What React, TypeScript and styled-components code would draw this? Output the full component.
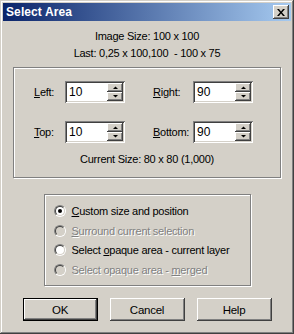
import React from "react";
import styled, { createGlobalStyle } from "styled-components";

const Global = createGlobalStyle`
  html, body { margin: 0; padding: 0; background: #D4D0C8; }
  body { font-family: "Liberation Sans", Arial, sans-serif; font-size: 11px; color: #000; letter-spacing: -0.25px; }
`;

const Window = styled.div`
  box-sizing: border-box;
  width: 294px;
  height: 334px;
  background: #D4D0C8;
  padding: 3px;
  box-shadow: inset -1px -1px 0 #404040, inset 1px 1px 0 #D4D0C8,
    inset -2px -2px 0 #808080, inset 2px 2px 0 #ffffff;
  display: flex;
  flex-direction: column;
`;

const TitleBar = styled.div`
  height: 18px;
  background: linear-gradient(to right, #0A246A, #A6CAF0);
  display: flex;
  align-items: center;
  justify-content: space-between;
  padding: 0 2px 0 3px;
`;

const Title = styled.span`
  color: #fff;
  font-weight: bold;
  font-size: 12px;
  letter-spacing: 0.1px;
`;

const Raised = styled.button`
  box-sizing: border-box;
  background: #D4D0C8;
  border: none;
  padding: 0;
  margin: 0;
  font-family: inherit;
  letter-spacing: inherit;
  color: #000;
  box-shadow: inset -1px -1px 0 #404040, inset 1px 1px 0 #ffffff,
    inset -2px -2px 0 #808080, inset 2px 2px 0 #D4D0C8;
  display: flex;
  align-items: center;
  justify-content: center;
`;

const CloseButton = styled(Raised)`
  width: 16px;
  height: 14px;
  box-shadow: inset -1px -1px 0 #404040, inset 1px 1px 0 #ffffff,
    inset -2px -2px 0 #808080;
`;

const Content = styled.div`
  flex: 1;
  display: flex;
  flex-direction: column;
  align-items: center;
  padding-top: 7px;
`;

const InfoLine = styled.div`
  line-height: 17px;
  height: 17px;
  text-align: center;
  white-space: pre;
`;

const GroupBox = styled.div<{ $w: number; $h: number; $mt: number }>`
  box-sizing: border-box;
  width: ${(p) => p.$w}px;
  height: ${(p) => p.$h}px;
  margin-top: ${(p) => p.$mt}px;
  border: 1px solid #808080;
  box-shadow: 1px 1px 0 #ffffff, inset 1px 1px 0 #ffffff;
`;

const FieldsGrid = styled.div`
  display: grid;
  grid-template-columns: 31px 60px 28px 40px 60px;
  row-gap: 18px;
  padding: 13px 0 0 20px;
  align-items: center;
`;

const Label = styled.label`
  line-height: 22px;
`;

const SpinBox = styled.div`
  box-sizing: border-box;
  height: 22px;
  width: 60px;
  background: #fff;
  box-shadow: inset 1px 1px 0 #808080, inset -1px -1px 0 #ffffff,
    inset 2px 2px 0 #404040, inset -2px -2px 0 #D4D0C8;
  display: flex;
  align-items: center;
  padding: 2px 2px 2px 4px;
`;

const SpinValue = styled.span`
  flex: 1;
  font-size: 12px;
  letter-spacing: 0;
`;

const SpinButtons = styled.div`
  display: flex;
  flex-direction: column;
  width: 16px;
  height: 18px;
`;

const SpinButton = styled(Raised)`
  width: 16px;
  height: 9px;
`;

const CurrentSize = styled.div`
  text-align: center;
  line-height: 17px;
  margin-top: 8px;
`;

const RadioList = styled.div`
  display: flex;
  flex-direction: column;
  padding: 6px 0 0 9px;
`;

const RadioRow = styled.div<{ $disabled?: boolean }>`
  display: flex;
  align-items: center;
  height: 19.7px;
  gap: 6px;
  color: ${(p) => (p.$disabled ? "#808080" : "#000")};
  text-shadow: ${(p) => (p.$disabled ? "1px 1px 0 #ffffff" : "none")};
`;

const RadioOuter = styled.span`
  box-sizing: border-box;
  width: 12px;
  height: 12px;
  border-radius: 50%;
  border: 1px solid;
  border-color: #808080 #ffffff #ffffff #808080;
  display: flex;
`;

const RadioInner = styled.span<{ $disabled?: boolean }>`
  box-sizing: border-box;
  width: 10px;
  height: 10px;
  border-radius: 50%;
  border: 1px solid;
  border-color: #404040 #D4D0C8 #D4D0C8 #404040;
  background: ${(p) => (p.$disabled ? "#D4D0C8" : "#ffffff")};
  display: flex;
  align-items: center;
  justify-content: center;
`;

const RadioDot = styled.span`
  width: 4px;
  height: 4px;
  border-radius: 50%;
  background: #000;
`;

const ButtonRow = styled.div`
  display: flex;
  gap: 12px;
  margin-top: 12px;
`;

const DialogButton = styled(Raised)<{ $default?: boolean }>`
  width: 75px;
  height: 23px;
  font-size: 11.5px;
  ${(p) =>
    p.$default
      ? `box-shadow: inset 0 0 0 1px #000, inset -2px -2px 0 #404040, inset 2px 2px 0 #ffffff,
    inset -3px -3px 0 #808080;`
      : ""}
`;

const Arrow = ({ up }: { up?: boolean }) => (
  <svg width="5" height="3" viewBox="0 0 5 3">
    <polygon points={up ? "0,3 5,3 2.5,0.5" : "0,0 5,0 2.5,2.5"} fill="#000" />
  </svg>
);

const Spin = ({ value }: { value: string }) => (
  <SpinBox>
    <SpinValue>{value}</SpinValue>
    <SpinButtons>
      <SpinButton>
        <Arrow up />
      </SpinButton>
      <SpinButton>
        <Arrow />
      </SpinButton>
    </SpinButtons>
  </SpinBox>
);

const Radio = ({
  checked,
  disabled,
  children,
}: {
  checked?: boolean;
  disabled?: boolean;
  children: React.ReactNode;
}) => (
  <RadioRow $disabled={disabled}>
    <RadioOuter>
      <RadioInner $disabled={disabled}>{checked && <RadioDot />}</RadioInner>
    </RadioOuter>
    <span>{children}</span>
  </RadioRow>
);

export default function App() {
  return (
    <>
      <Global />
      <Window>
        <TitleBar>
          <Title>Select Area</Title>
          <CloseButton>
            <svg width="8" height="7" viewBox="0 0 8 7">
              <path d="M0 0h2l2 2.5L6 0h2L5 3.5 8 7H6L4 4.5 2 7H0l3-3.5z" fill="#000" />
            </svg>
          </CloseButton>
        </TitleBar>
        <Content>
          <InfoLine>Image Size: 100 x 100</InfoLine>
          <InfoLine>{"Last: 0,25 x 100,100  - 100 x 75"}</InfoLine>
          <GroupBox $w={268} $h={111} $mt={5}>
            <FieldsGrid>
              <Label>
                <u>L</u>eft:
              </Label>
              <Spin value="10" />
              <span />
              <Label>
                <u>R</u>ight:
              </Label>
              <Spin value="90" />
              <Label>
                <u>T</u>op:
              </Label>
              <Spin value="10" />
              <span />
              <Label>
                <u>B</u>ottom:
              </Label>
              <Spin value="90" />
            </FieldsGrid>
            <CurrentSize>Current Size: 80 x 80 (1,000)</CurrentSize>
          </GroupBox>
          <GroupBox $w={207} $h={92} $mt={16}>
            <RadioList>
              <Radio checked>
                <u>C</u>ustom size and position
              </Radio>
              <Radio disabled>
                <u>S</u>urround current selection
              </Radio>
              <Radio>
                Select <u>o</u>paque area - current layer
              </Radio>
              <Radio disabled>
                Select opaque area - <u>m</u>erged
              </Radio>
            </RadioList>
          </GroupBox>
          <ButtonRow>
            <DialogButton $default>OK</DialogButton>
            <DialogButton>Cancel</DialogButton>
            <DialogButton>Help</DialogButton>
          </ButtonRow>
        </Content>
      </Window>
    </>
  );
}
